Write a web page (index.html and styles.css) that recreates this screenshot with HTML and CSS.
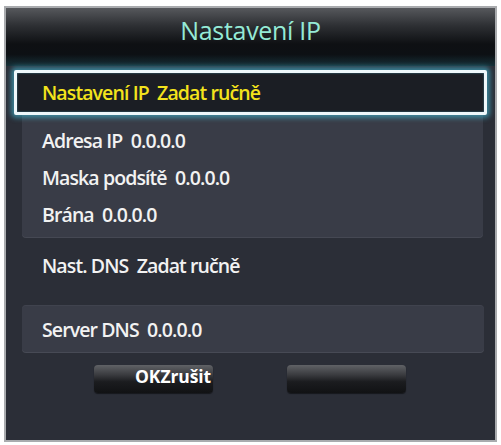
FILE: index.html
```html
<!DOCTYPE html>
<html lang="cs">
<head>
<meta charset="utf-8">
<title>Nastavení IP</title>
<link rel="stylesheet" href="styles.css">
</head>
<body>
<div class="frame">
  <div class="header"><span class="title">Nastavení IP</span></div>
  <div class="selected"><span>Nastavení IP&nbsp; Zadat ručně</span></div>
  <div class="group">
    <div class="row r1">Adresa IP&nbsp; 0.0.0.0</div>
    <div class="row r2">Maska podsítě&nbsp; 0.0.0.0</div>
    <div class="row r3">Brána&nbsp; 0.0.0.0</div>
  </div>
  <div class="dns">Nast. DNS&nbsp; Zadat ručně</div>
  <div class="server">Server DNS&nbsp; 0.0.0.0</div>
  <div class="buttons">
    <div class="btn">OKZrušit</div>
    <div class="btn"></div>
  </div>
</div>
</body>
</html>
```
FILE: styles.css
```css
html, body {
  margin: 0;
  padding: 0;
  background: #ffffff;
}
body {
  font-family: "Open Sans", "Noto Sans", sans-serif;
  -webkit-font-smoothing: antialiased;
}
.frame {
  box-sizing: border-box;
  margin: 6px 0 0 4px;
  width: 493px;
  height: 436px;
  border: 2px solid #a9abae;
  background: #2b2e37;
  display: flex;
  flex-direction: column;
  overflow: hidden;
}
.header {
  height: 58px;
  flex: none;
  background: linear-gradient(to bottom, #56585c 0%, #2e3034 30%, #0e1013 62%, #0d1014 80%, #163038 100%);
  text-align: center;
  box-sizing: border-box;
  padding-top: 6px;
}
.title {
  font-size: 25px;
  line-height: 32px;
  color: #95ead6;
  letter-spacing: -0.3px;
}
.selected {
  flex: none;
  box-sizing: border-box;
  margin: 4px 0 0 8px;
  width: 473px;
  height: 45px;
  border: 3px solid #eef8fb;
  border-radius: 2px;
  background: #1b1e24;
  box-shadow: 0 0 5px 3px rgba(70, 200, 230, 0.55), inset 0 0 2px rgba(90, 200, 230, 0.6);
  padding-left: 25px;
  display: flex;
  align-items: center;
  color: #f3e31c;
  font-size: 19.5px;
  font-weight: 600;
  letter-spacing: -0.9px;
  position: relative;
  z-index: 1;
}
.group {
  flex: none;
  box-sizing: border-box;
  margin-left: 16px;
  width: 461px;
  height: 122px;
  background: #393c47;
  border-radius: 0 0 4px 4px;
  box-shadow: 0 1px 0 #454853;
  padding-top: 6px;
}
.row, .dns, .server {
  color: #f2f2f2;
  font-size: 19.5px;
  font-weight: 600;
  letter-spacing: -0.9px;
  display: flex;
  align-items: center;
}
.row {
  height: 37px;
  padding-left: 20px;
}
.r1 { height: 38px; }
.dns {
  flex: none;
  height: 57px;
  padding-left: 36px;
}
.server {
  flex: none;
  box-sizing: border-box;
  margin: 11px 0 0 16px;
  width: 462px;
  height: 47px;
  background: #393c47;
  border-radius: 4px;
  border-top: 1px solid #40434e;
  box-shadow: 0 1px 0 #474a55;
  padding-left: 20px;
}
.buttons {
  flex: none;
  margin-top: 13px;
  display: flex;
  justify-content: center;
  gap: 74px;
  padding-right: 1px;
}
.btn {
  box-sizing: border-box;
  width: 119px;
  height: 28px;
  border-radius: 4px;
  background: linear-gradient(to bottom, #606266 0%, #3a3b3f 35%, #1b1c1f 60%, #111214 100%);
  box-shadow: 0 1px 1px rgba(0, 0, 0, 0.5);
  color: #ffffff;
  font-weight: 700;
  font-size: 17.5px;
  line-height: 22px;
  text-align: right;
  padding-right: 2px;
  letter-spacing: -0.1px;
}
```
